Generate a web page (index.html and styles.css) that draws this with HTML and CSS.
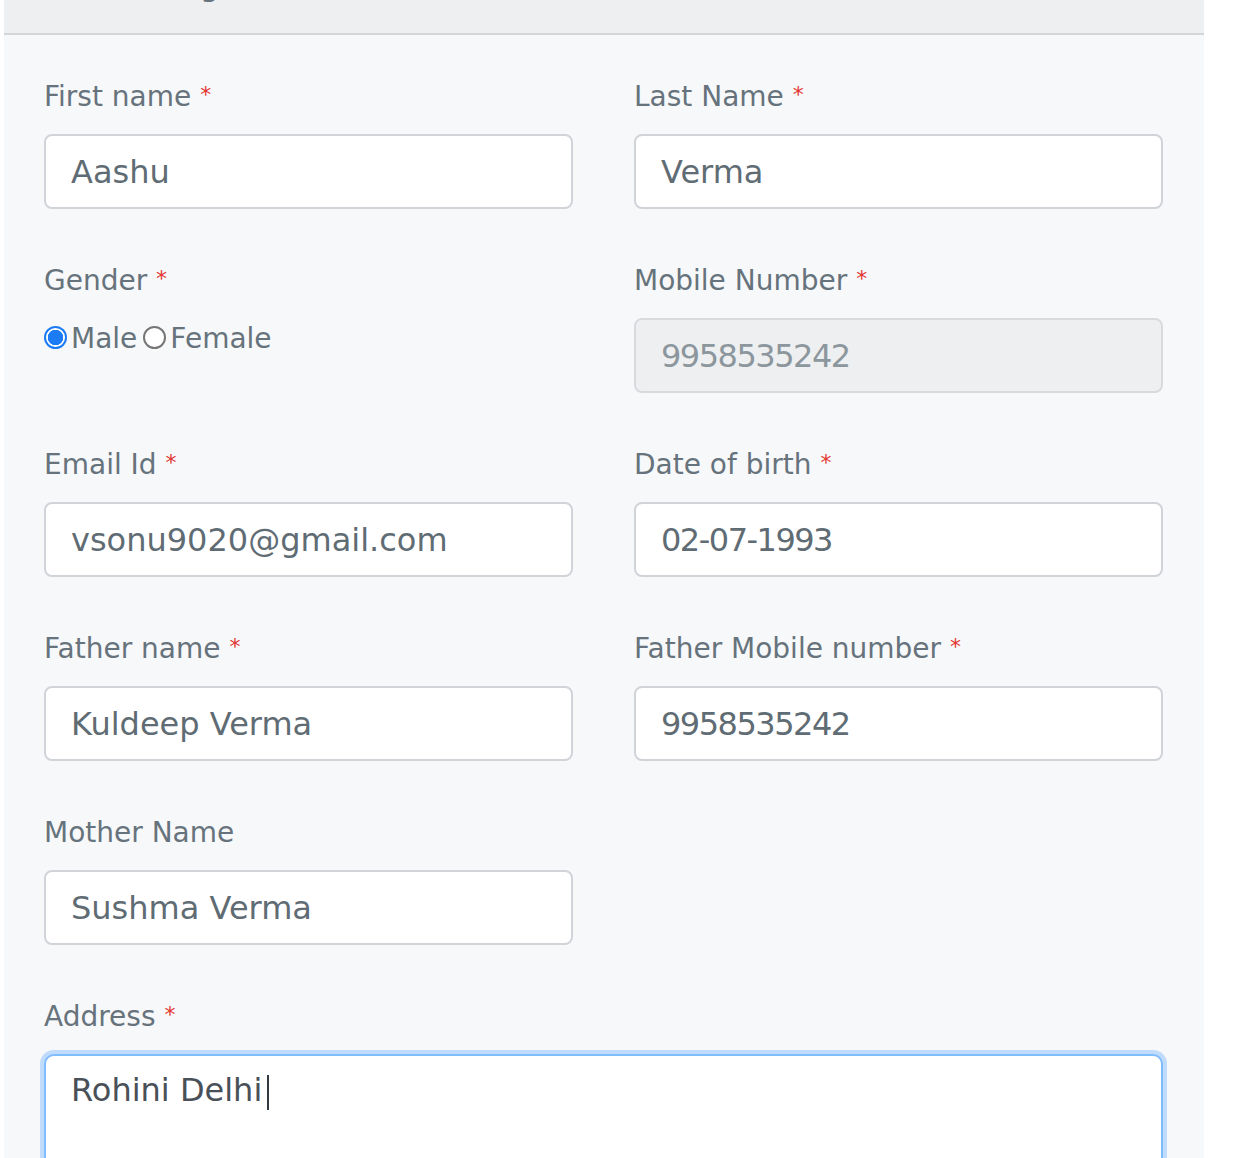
FILE: index.html
```html
<!DOCTYPE html>
<html lang="en">
<head>
<meta charset="utf-8">
<title>Edit Settings</title>
<link rel="stylesheet" href="styles.css">
</head>
<body>
<div class="panel">
  <div class="panel-head"><h2 class="panel-title">Edit Settings</h2></div>
  <form class="panel-body">
    <div class="field">
      <label class="label">First name <span class="req">*</span></label>
      <input class="control" type="text" value="Aashu">
    </div>
    <div class="field">
      <label class="label">Last Name <span class="req">*</span></label>
      <input class="control" type="text" value="Verma">
    </div>
    <div class="field">
      <label class="label">Gender <span class="req">*</span></label>
      <div class="radios">
        <label class="radio"><span class="dot checked"></span>Male</label>
        <label class="radio"><span class="dot"></span>Female</label>
      </div>
    </div>
    <div class="field">
      <label class="label">Mobile Number <span class="req">*</span></label>
      <input class="control num disabled" type="text" value="9958535242" disabled>
    </div>
    <div class="field">
      <label class="label">Email Id <span class="req">*</span></label>
      <input class="control" type="text" value="vsonu9020@gmail.com">
    </div>
    <div class="field">
      <label class="label">Date of birth <span class="req">*</span></label>
      <input class="control num" type="text" value="02-07-1993">
    </div>
    <div class="field">
      <label class="label">Father name <span class="req">*</span></label>
      <input class="control" type="text" value="Kuldeep Verma">
    </div>
    <div class="field">
      <label class="label">Father Mobile number <span class="req">*</span></label>
      <input class="control num" type="text" value="9958535242">
    </div>
    <div class="field">
      <label class="label">Mother Name</label>
      <input class="control" type="text" value="Sushma Verma">
    </div>
    <div class="field empty"></div>
    <div class="field wide">
      <label class="label">Address <span class="req">*</span></label>
      <div class="area-wrap">
        <textarea class="control area">Rohini Delhi</textarea>
        <span class="caret"></span>
      </div>
    </div>
  </form>
</div>
</body>
</html>
```

FILE: styles.css
```css
html, body {
  margin: 0;
  padding: 0;
  background: #ffffff;
}

body {
  font-family: "DejaVu Sans", "Noto Sans", sans-serif;
  overflow: hidden;
}

.panel {
  margin-left: 4px;
  width: 1200px;
  background: #f7f8fa;
  min-height: 1158px;
}

.panel-head {
  height: 33px;
  background: #eeeff1;
  border-bottom: 2px solid #d4d5d8;
  overflow: hidden;
  padding-left: 40px;
}

.panel-title {
  margin: -29px 0 0 0;
  font-size: 30px;
  line-height: 30px;
  font-weight: normal;
  color: #66737c;
}

.panel-body {
  display: grid;
  grid-template-columns: 1fr 1fr;
  column-gap: 61px;
  row-gap: 51px;
  padding: 41px 41px 0 40px;
}

.field {
  display: flex;
  flex-direction: column;
  gap: 16px;
}

.field.wide {
  grid-column: 1 / span 2;
}

.label {
  display: block;
  height: 42px;
  font-size: 28px;
  line-height: 42px;
  color: #66737c;
}

.req {
  position: relative;
  top: -4px;
  color: #e3342f;
  font-size: 22px;
  line-height: 0;
}

.control {
  box-sizing: border-box;
  height: 75px;
  width: 100%;
  margin: 0;
  padding: 0 24px 0 25px;
  border: 2px solid #d0d4d9;
  border-radius: 8px;
  background: #ffffff;
  font-family: "DejaVu Sans", "Noto Sans", sans-serif;
  font-size: 32px;
  color: #5f6c74;
  outline: none;
}

.control.num {
  letter-spacing: -1.5px;
}

.control.disabled {
  background: #eeeff1;
  border-color: #d8dbde;
  color: #8c969d;
  -webkit-text-fill-color: #8c969d;
  opacity: 1;
}

.radios {
  display: flex;
  align-items: center;
  gap: 6px;
  height: 42px;
  font-size: 28px;
  line-height: 42px;
  color: #66737c;
}

.radio {
  display: flex;
  align-items: center;
  gap: 4px;
}

.dot {
  box-sizing: border-box;
  width: 23px;
  height: 23px;
  border-radius: 50%;
  border: 2px solid #767676;
  background: #ffffff;
  margin-top: -3px;
}

.dot.checked {
  border-color: #1b7cf5;
  background: radial-gradient(circle, #1b7cf5 0 7.5px, #ffffff 8px);
}

.area-wrap {
  position: relative;
}

.control.area {
  display: block;
  height: 160px;
  padding: 10px 24px 0 25px;
  line-height: 48px;
  resize: none;
  border-color: #80bdff;
  border-radius: 10px;
  box-shadow: 0 0 0 4px #c0dbfb;
  color: #495057;
}

.caret {
  position: absolute;
  left: 223px;
  top: 21px;
  width: 2px;
  height: 35px;
  background: #333a40;
}
```
